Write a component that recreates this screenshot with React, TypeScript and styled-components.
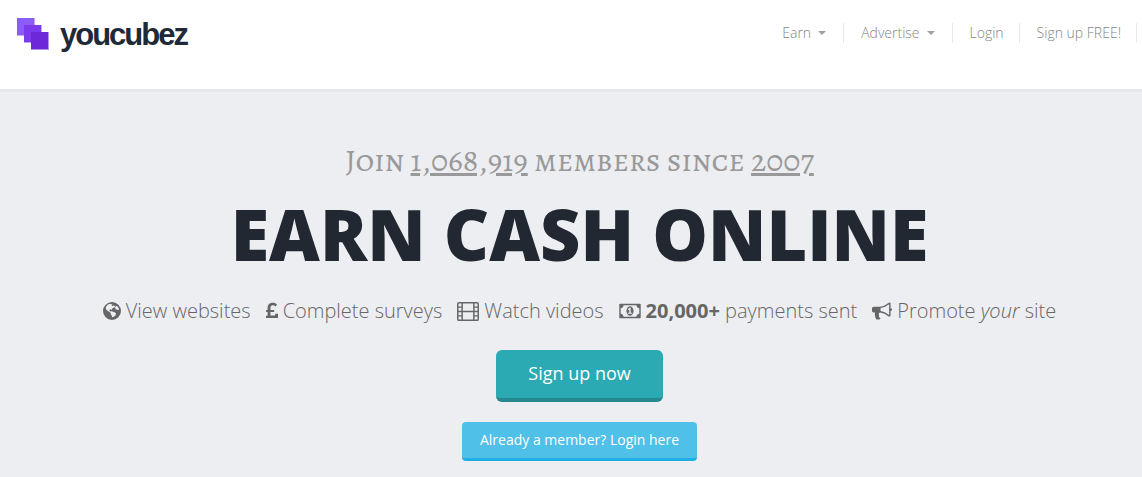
import React from 'react';
import styled, { createGlobalStyle, css } from 'styled-components';

const GlobalStyle = createGlobalStyle`
  *, *::before, *::after { box-sizing: border-box; }
  body {
    margin: 0;
    background: #edeef2;
    color: #666;
    font-family: "Open Sans", sans-serif;
    font-weight: 300;
  }
`;

const Header = styled.header`
  display: flex;
  justify-content: space-between;
  align-items: flex-start;
  height: 92px;
  padding: 17px 5px 0 17px;
  background: #fff;
  border-bottom: 3px solid #e4e6e9;
`;

const Logo = styled.a`
  display: flex;
  align-items: center;
  gap: 10px;
  color: #1f2937;
  font-family: "Liberation Sans", Arial, sans-serif;
  font-size: 31px;
  font-weight: 700;
  line-height: 36px;
  letter-spacing: -2px;
  text-decoration: none;
`;

const Nav = styled.nav`
  display: flex;
  padding-top: 6px;
`;

const NavLink = styled.a`
  display: flex;
  align-items: center;
  gap: 7px;
  height: 20px;
  padding: 0 15px 0 17px;
  border-right: 1px solid #ebebeb;
  color: #858585;
  font-size: 14px;
  line-height: 20px;
  text-decoration: none;
`;

const Caret = styled.span`
  margin-right: 2px;
  border: 4px solid transparent;
  border-top-color: #a0a0a0;
  border-bottom: 0;
`;

const Hero = styled.main`
  display: flex;
  flex-direction: column;
  align-items: center;
  padding: 48px 0 16px 17px;
`;

const Members = styled.p`
  margin: 0;
  color: #999;
  font-family: "Alegreya SC", "Liberation Serif", serif;
  font-size: 32px;
  font-weight: 400;
  line-height: 40px;
`;

const Title = styled.h1`
  margin: 6px 0 0;
  color: #212831;
  font-size: 70px;
  font-weight: 800;
  line-height: 96px;
`;

const Features = styled.ul`
  display: flex;
  flex-wrap: wrap;
  justify-content: center;
  gap: 0 15px;
  margin: 15px 0 0;
  padding: 0;
  list-style: none;
  font-size: 20px;
  line-height: 28px;
`;

const Feature = styled.li`
  display: flex;
  align-items: center;
  gap: 5px;

  svg { flex: none; fill: #666; }
  strong { font-weight: 700; }
`;

const Button = styled.button<{ $large?: boolean }>`
  border: 0;
  color: #fff;
  font-family: inherit;
  font-weight: 400;
  cursor: pointer;
  ${({ $large }) =>
    $large
      ? css`
          margin-top: 25px;
          padding: 11px 32px 13px;
          border-bottom: 4px solid #24898f;
          border-radius: 6px;
          background: #2caab3;
          font-size: 18px;
          line-height: 24px;
        `
      : css`
          margin-top: 20px;
          padding: 8px 18px;
          border-bottom: 3px solid #1fafe4;
          border-radius: 4px;
          background: #4fc0e8;
          font-size: 14px;
          line-height: 20px;
        `}
`;

const CubesMark = () => (
  <svg width="33" height="35" viewBox="0 0 33 35" aria-hidden="true">
    <path fill="#c4a5fa" d="M0 0h18v18H0z" />
    <path fill="#8b5cf6" d="M0 0h17v17H0z" />
    <path fill="#c4a5fa" d="M7 7h18v18H7z" />
    <path fill="#7c3aed" d="M7 7h17v17H7z" />
    <path fill="#b794f0" d="M14 14h18v18H14z" />
    <path fill="#6d28d9" d="M14 14h17v17H14z" />
  </svg>
);

const GlobeIcon = () => (
  <svg width="18" height="18" viewBox="0 0 18 18" aria-hidden="true">
    <path
      fillRule="evenodd"
      d="M9 0a9 9 0 1 1 0 18A9 9 0 0 1 9 0zM7 1.800L4.600 2.800 3.200 4.600 2.700 6.500 3.600 8l1.500 1.300 1.600.6 1 1 .1 1.400 1 1.400.3 1.500 1.600-.4 1.700-1.400.7-1.900-1.600-1.300-1.900-.6-1.300-.4-1 .2-.8-.6.2-1.200 1.200-.3.9.7.400-1.400 1.700-1.200 1.500-.5-.8-1.200-1.300-.2-1.300.7-.4-.8 1.100-.7zM13 4l-1 1.800.8 1.500 1.800.7 1.400-.4-.5-1.800-1.200-1.600z"
    />
  </svg>
);

const PoundIcon = () => (
  <svg width="12" height="18" viewBox="0 0 12 18" aria-hidden="true">
    <path d="M0 16v-2.300h1.600V10H.1V8h1.500V5.500C1.600 2.700 3.700.8 6.800.8c1.700 0 3.200.6 4.300 1.600L9.500 4.400C8.700 3.700 7.900 3.300 6.900 3.300c-1.500 0-2.400.9-2.400 2.300V8h3.700v2H4.500v3.600h4.600v-1.900H12V16z" />
  </svg>
);

const FilmIcon = () => (
  <svg width="22" height="19" viewBox="0 0 1920 1664" aria-hidden="true">
    <path
      fillRule="evenodd"
      d="M160 0H1760q66 0 113 47t47 113V1504q0 66-47 113t-113 47H160q-66 0-113-47T0 1504V160Q0 94 47 47T160 0zM128 128v256h256V128zm0 384v256h256V512zm0 384v256h256V896zm0 384v256h256v-256zM512 128v640h896V128zm0 768v640h896V896zM1536 128v256h256V128zm0 384v256h256V512zm0 384v256h256V896zm0 384v256h256v-256z"
    />
  </svg>
);

const MoneyIcon = () => (
  <svg width="22" height="20" viewBox="0 0 1920 1792" aria-hidden="true">
    <path
      fillRule="evenodd"
      d="M768 1152h384v-96h-128v-448H910L762 745l77 80q42-37 55-57h2v288H768zM1280 896q0 70-21 142t-59.500 134-101.500 101-138 39-138-39-101.500-101-59.500-134-21-142 21-142 59.500-134 101.500-101 138-39 138 39 101.500 101 59.500 134 21 142zM1792 1152V640q-106 0-181-75t-75-181H384q0 106-75 181t-181 75v512q106 0 181 75t75 181h1152q0-106 75-181t181-75zM1920 320v1152q0 26-19 45t-45 19H64q-26 0-45-19t-19-45V320q0-26 19-45t45-19h1792q26 0 45 19t19 45z"
    />
  </svg>
);

const BullhornIcon = () => (
  <svg width="20" height="20" viewBox="0 0 1792 1792" aria-hidden="true">
    <path d="M1664 640q53 0 90.500 37.500t37.500 90.500-37.500 90.500-90.500 37.500v384q0 52-38 90t-90 38q-417-347-812-380-58 19-91 66t-31 100.500 40 92.500q-20 33-23 65.500t6 58 33.500 55 48 50 61.500 50.500q-29 58-111.500 83t-168.500 11.500-132-55.500q-7-23-29.500-87.500t-32-94.500-23-89-15-101 3.500-98.500 22-110.500h-122q-66 0-113-47t-47-113v-192q0-66 47-113t113-47h480q435 0 896-384 52 0 90 38t38 90v384zm-128 604V290q-394 302-768 343v270q377 42 768 341z" />
  </svg>
);

export default function App() {
  return (
    <>
      <GlobalStyle />
      <Header>
        <Logo href="#home"><CubesMark />youcubez</Logo>
        <Nav aria-label="Main">
          <NavLink href="#earn">Earn<Caret /></NavLink>
          <NavLink href="#advertise">Advertise<Caret /></NavLink>
          <NavLink href="#login">Login</NavLink>
          <NavLink href="#signup">Sign up FREE!</NavLink>
        </Nav>
      </Header>
      <Hero>
        <Members>Join <u>1,068,919</u> members since <u>2007</u></Members>
        <Title>EARN CASH ONLINE</Title>
        <Features>
          <Feature><GlobeIcon /><span>View websites</span></Feature>
          <Feature><PoundIcon /><span>Complete surveys</span></Feature>
          <Feature><FilmIcon /><span>Watch videos</span></Feature>
          <Feature><MoneyIcon /><span><strong>20,000+</strong> payments sent</span></Feature>
          <Feature><BullhornIcon /><span>Promote <em>your</em> site</span></Feature>
        </Features>
        <Button type="button" $large>Sign up now</Button>
        <Button type="button">Already a member? Login here</Button>
      </Hero>
    </>
  );
}
